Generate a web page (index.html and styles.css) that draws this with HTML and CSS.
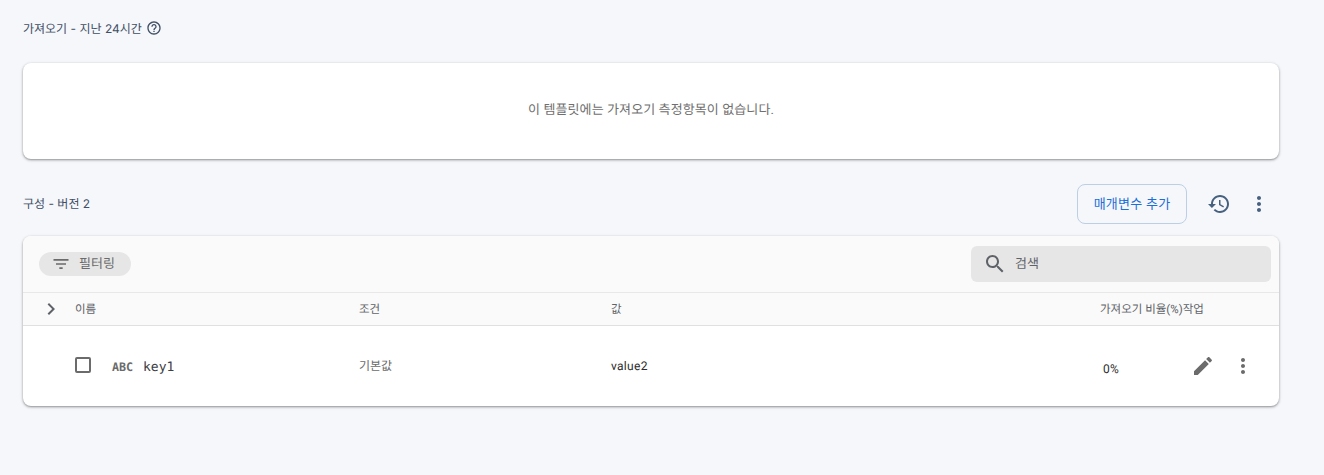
FILE: index.html
```html
<!DOCTYPE html>
<html lang="ko">
<head>
<meta charset="utf-8">
<title>구성</title>
<link rel="stylesheet" href="styles.css">
</head>
<body>
<main class="page">
  <div class="import-head">
    <span class="label import-label">가져오기 - 지난 24시간</span>
    <svg class="help" viewBox="0 0 24 24" width="16" height="16"><path fill="currentColor" d="M11 18h2v-2h-2v2zm1-16C6.48 2 2 6.48 2 12s4.48 10 10 10 10-4.48 10-10S17.52 2 12 2zm0 18c-4.41 0-8-3.59-8-8s3.59-8 8-8 8 3.59 8 8-3.59 8-8 8zm0-14c-2.21 0-4 1.79-4 4h2c0-1.1.9-2 2-2s2 .9 2 2c0 2-3 1.75-3 5h2c0-2.25 3-2.5 3-5 0-2.21-1.79-4-4-4z"/></svg>
  </div>
  <section class="card empty">이 템플릿에는 가져오기 측정항목이 없습니다.</section>
  <div class="config-head">
    <span class="label">구성 - 버전 2</span>
    <div class="config-actions">
      <button class="add-btn">매개변수 추가</button>
      <svg class="hist" viewBox="0 0 24 24" width="24" height="24"><path fill="currentColor" d="M13 3c-4.97 0-9 4.03-9 9H1l3.89 3.89.07.14L9 12H6c0-3.87 3.13-7 7-7s7 3.13 7 7-3.13 7-7 7c-1.93 0-3.68-.79-4.94-2.06l-1.42 1.42C8.27 19.99 10.51 21 13 21c4.97 0 9-4.03 9-9s-4.03-9-9-9zm-1 5v5l4.28 2.54.72-1.21-3.5-2.08V8H12z"/></svg>
      <svg class="hist" viewBox="0 0 24 24" width="24" height="24"><path fill="currentColor" d="M12 8c1.1 0 2-.9 2-2s-.9-2-2-2-2 .9-2 2 .9 2 2 2zm0 2c-1.1 0-2 .9-2 2s.9 2 2 2 2-.9 2-2-.9-2-2-2zm0 6c-1.1 0-2 .9-2 2s.9 2 2 2 2-.9 2-2-.9-2-2-2z"/></svg>
    </div>
  </div>
  <section class="card table">
    <div class="toolbar">
      <div class="chip">
        <svg viewBox="0 0 24 24" width="20" height="20"><path fill="currentColor" d="M10 18h4v-2h-4v2zM3 6v2h18V6H3zm3 7h12v-2H6v2z"/></svg>
        <span class="tool-text">필터링</span>
      </div>
      <div class="search">
        <svg viewBox="0 0 24 24" width="24" height="24"><path fill="currentColor" d="M15.5 14h-.79l-.28-.27C15.41 12.59 16 11.11 16 9.5 16 5.91 13.09 3 9.5 3S3 5.91 3 9.5 5.91 16 9.5 16c1.61 0 3.09-.59 4.23-1.57l.27.28v.79l5 4.99L20.49 19l-4.99-5zm-6 0C7.01 14 5 11.99 5 9.5S7.01 5 9.5 5 14 7.01 14 9.5 11.99 14 9.5 14z"/></svg>
        <span class="tool-text">검색</span>
      </div>
    </div>
    <div class="grid head">
      <div class="name-cell">
        <svg class="chev" viewBox="0 0 24 24" width="24" height="24"><path fill="currentColor" d="M10 6L8.59 7.41 13.17 12l-4.58 4.59L10 18l6-6z"/></svg>
        <span>이름</span>
      </div>
      <div>조건</div>
      <div>값</div>
      <div class="head-end">가져오기 비율(%)작업</div>
    </div>
    <div class="grid row">
      <div class="name-cell body-name">
        <span class="checkbox"></span>
        <span class="abc">ABC</span>
        <span class="key">key1</span>
      </div>
      <div class="muted">기본값</div>
      <div class="value">value2</div>
      <div class="row-end">
        <span class="pct">0%</span>
        <svg class="edit" viewBox="0 0 24 24" width="24" height="24"><path fill="currentColor" d="M3 17.25V21h3.75L17.81 9.94l-3.75-3.75L3 17.25zM20.71 7.04c.39-.39.39-1.02 0-1.41l-2.34-2.34c-.39-.39-1.02-.39-1.41 0l-1.83 1.83 3.75 3.75 1.83-1.83z"/></svg>
        <svg class="more" viewBox="0 0 24 24" width="24" height="24"><path fill="currentColor" d="M12 8c1.1 0 2-.9 2-2s-.9-2-2-2-2 .9-2 2 .9 2 2 2zm0 2c-1.1 0-2 .9-2 2s.9 2 2 2 2-.9 2-2-.9-2-2-2zm0 6c-1.1 0-2 .9-2 2s.9 2 2 2 2-.9 2-2-.9-2-2-2z"/></svg>
      </div>
    </div>
  </section>
</main>
</body>
</html>
```
FILE: styles.css
```css
* { box-sizing: border-box; }
html, body { margin: 0; height: 100%; }
body {
  background: #f6f7fa;
  font-family: Roboto, "Noto Sans CJK KR", sans-serif;
  font-size: 12px;
  line-height: 16px;
  color: #202124;
  overflow: hidden;
  text-rendering: geometricPrecision;
}
.page { width: 1256px; margin-left: 23px; }
.label {
  color: #3f4f66;
  font-family: Inter, "Noto Sans CJK KR", sans-serif;
  font-size: 12px;
}
.import-label { margin-top: 2px; }
.import-head {
  height: 63px;
  padding-bottom: 7px;
  display: flex;
  align-items: center;
  gap: 4px;
}
.help { color: #3f4f66; }
.card {
  background: #fff;
  border-radius: 8px;
  box-shadow: 0 1px 2px rgba(60,64,67,.45), 0 1px 3px 1px rgba(60,64,67,.12);
}
.empty {
  height: 96px;
  padding-bottom: 1px;
  display: flex;
  align-items: center;
  justify-content: center;
  color: #6f6f6f;
  font-size: 13px;
  letter-spacing: .1px;
}
.config-head {
  height: 77px;
  padding-top: 25px;
  padding-bottom: 12px;
  display: flex;
  align-items: center;
  justify-content: space-between;
}
.config-actions { display: flex; align-items: center; color: #46607f; }
.add-btn {
  width: 110px;
  height: 40px;
  margin-right: 20px;
  background: transparent;
  border: 1px solid #bccfe6;
  border-radius: 8px;
  color: #1a6fd8;
  font: 400 13px/16px Roboto, "Noto Sans CJK KR", sans-serif;
  letter-spacing: .25px;
  padding: 0 0 1px;
}
.hist + .hist { margin-left: 16px; margin-right: 8px; }
.table { height: 170px; overflow: hidden; }
.toolbar {
  height: 56px;
  background: #fafafa;
  display: flex;
  align-items: center;
  justify-content: space-between;
  padding: 0 8px 0 16px;
  color: #6b6b6b;
}
.tool-text { margin-top: 2px; }
.chip {
  width: 92px;
  height: 24px;
  border-radius: 12px;
  background: #e6e6e6;
  display: flex;
  align-items: center;
  gap: 8px;
  padding-left: 12px;
  font-size: 13px;
}
.search {
  width: 300px;
  height: 36px;
  background: #e6e6e6;
  border-radius: 6px;
  display: flex;
  align-items: center;
  gap: 8px;
  padding-left: 12px;
  font-size: 13px;
  color: #5f6368;
}
.grid {
  display: grid;
  grid-template-columns: 336px 252px 489px 179px;
  align-items: center;
}
.head {
  height: 34px;
  background: #fafafa;
  border-top: 1px solid #e8e8e8;
  border-bottom: 1px solid #e0e0e0;
  color: #5f6368;
  font-size: 11.5px;
}
.name-cell { display: flex; align-items: center; }
.chev { margin-left: 16px; margin-right: 12px; color: #5f6368; }
.head-end { white-space: nowrap; }
.row { height: 80px; }
.body-name { padding-left: 52px; }
.checkbox {
  width: 16px;
  height: 16px;
  border: 2px solid #6b6b6b;
  border-radius: 2px;
  margin-top: -2px;
}
.abc {
  margin-left: 21px;
  margin-top: 1px;
  width: 31px;
  font: 700 11.7px/16px "DejaVu Sans Mono", monospace;
  color: #6b6b6b;
}
.key { font: 13px/16px "DejaVu Sans Mono", monospace; color: #3c4043; margin-top: 3px; }
.muted { color: #6b6b6b; padding-bottom: 1px; }
.value { letter-spacing: .3px; padding-bottom: 1px; color: #2c2c2c; }
.row-end { display: flex; align-items: center; color: #6b6b6b; }
.pct { color: #2c2c2c; margin-left: 3px; margin-top: 6px; width: 88px; letter-spacing: .3px; }
.more { margin-left: 16px; }
```
